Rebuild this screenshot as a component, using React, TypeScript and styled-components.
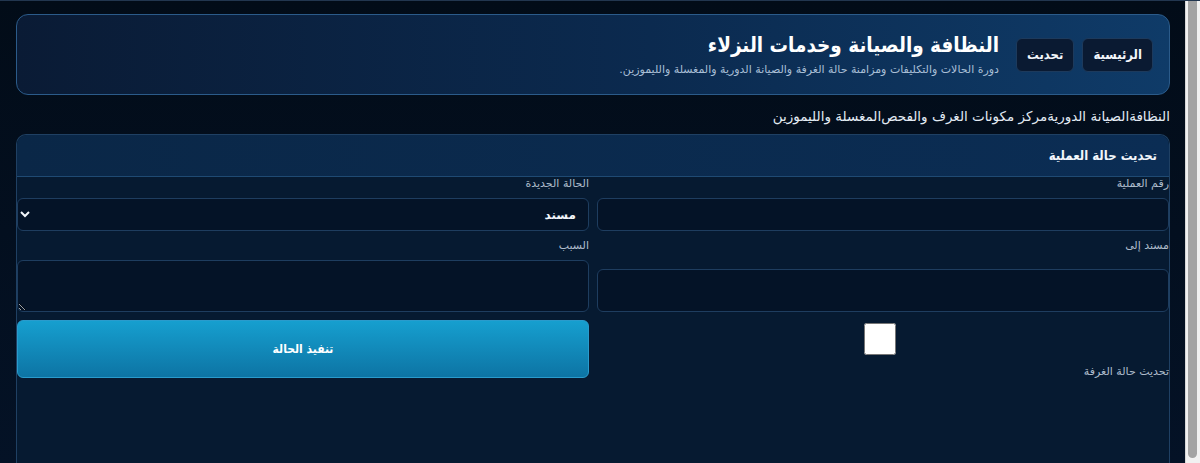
import styled, { createGlobalStyle } from 'styled-components';

const GlobalStyle = createGlobalStyle`
  html, body {
    margin: 0;
    padding: 0;
  }
  body {
    background: linear-gradient(180deg, #020c18 0%, #041226 100%);
    border-top: 1px solid #22364f;
    color: #e6eef7;
    font-family: "DejaVu Sans", "Noto Sans", sans-serif;
    overflow: hidden;
  }
  * {
    box-sizing: border-box;
  }
`;

const narrow = `
  font-family: "DejaVu Sans Condensed", "DejaVu Sans", sans-serif;
  font-stretch: condensed;
`;

const Viewport = styled.div`
  display: flex;
  direction: ltr;
  height: calc(100vh - 1px);
  overflow: hidden;
`;

const Page = styled.div`
  flex: 1;
  min-width: 0;
  direction: rtl;
  padding: 13px 15px 0 16px;
  display: flex;
  flex-direction: column;
`;

/* the browser draws no scrollbar here, so the one in the picture is drawn as a rail */
const ScrollRail = styled.div`
  flex: 0 0 15px;
  background: #f1f1f1;
  border-left: 1px solid #d6d6d6;
  padding: 0 3px 5px 2px;
`;

const ScrollThumb = styled.div`
  height: 100%;
  background: #a3a3a3;
  border-radius: 0 0 5px 5px;
`;

const Hero = styled.header`
  display: flex;
  align-items: center;
  gap: 17px;
  flex: 0 0 81px;
  padding: 0 16px;
  border: 1px solid #2b5b8a;
  border-radius: 12px;
  background: linear-gradient(270deg, #0f3b68 0%, #0b2a4f 45%, #0a1b35 100%);
`;

const HeroActions = styled.div`
  display: flex;
  gap: 8px;
`;

const HeroButton = styled.button`
  ${narrow}
  font-size: 13px;
  font-weight: bold;
  color: #f2f6fb;
  background: #0a1a32;
  border: 1px solid #1d3a5c;
  border-radius: 6px;
  height: 34px;
  padding: 0 10px;
`;

const HeroText = styled.div`
  display: flex;
  flex-direction: column;
  gap: 6px;
`;

const Title = styled.h1`
  ${narrow}
  margin: 0;
  font-size: 20.5px;
  font-weight: bold;
  color: #ffffff;
`;

const Subtitle = styled.p`
  margin: 0;
  font-size: 11px;
  color: #a9bfd6;
`;

const Nav = styled.nav`
  display: flex;
  padding: 13px 0 10px;
  font-size: 13.5px;
`;

const NavLink = styled.a`
  color: #e3ebf4;
  text-decoration: none;
`;

const Card = styled.section`
  flex: 0 0 auto;
  border: 1px solid #1f4063;
  border-bottom: none;
  border-radius: 10px 10px 0 0;
  background: #061a31;
  min-height: 340px;
`;

const CardHeader = styled.div`
  height: 42px;
  display: flex;
  align-items: center;
  padding: 0 12px;
  border-bottom: 1px solid #1f4a73;
  border-radius: 10px 10px 0 0;
  background: linear-gradient(270deg, #0b2d54 0%, #0a2747 100%);
`;

const CardTitle = styled.h2`
  ${narrow}
  margin: 0;
  font-size: 13px;
  font-weight: bold;
  color: #f2f6fb;
`;

const FormGrid = styled.div`
  display: grid;
  grid-template-columns: 1fr 1fr;
  column-gap: 8px;
  row-gap: 8px;
`;

const Field = styled.div`
  display: flex;
  flex-direction: column;
`;

const Label = styled.label`
  font-size: 11px;
  color: #aebccb;
  line-height: 13px;
  padding-bottom: 8px;
`;

const controlBase = `
  font-family: inherit;
  background: #041327;
  border: 1px solid #1e3d5f;
  border-radius: 6px;
  color: #f2f6fb;
  width: 100%;
  margin-top: auto;
`;

const Input = styled.input<{ $tall?: boolean }>`
  ${controlBase}
  height: ${(p) => (p.$tall ? '43px' : '33px')};
`;

const SelectBox = styled.select`
  ${controlBase}
  height: 33px;
  font-size: 12px;
  font-weight: bold;
  padding: 0 8px;
`;

const TextArea = styled.textarea`
  ${controlBase}
  height: 52px;
  resize: vertical;
`;

const SubmitButton = styled.button`
  ${narrow}
  height: 58px;
  border: 1px solid #2a9bcc;
  border-radius: 6px;
  background: linear-gradient(180deg, #169fcf 0%, #0d74a4 100%);
  color: #ffffff;
  font-size: 12px;
  font-weight: bold;
`;

const CheckField = styled.label`
  display: flex;
  flex-direction: column;
  font-size: 11px;
  line-height: 13px;
  color: #aebccb;
`;

const CheckBox = styled.input`
  align-self: center;
  width: 32px;
  height: 32px;
  margin: 3px 6px 10px 0;
`;

export default function App() {
  return (
    <>
      <GlobalStyle />
      <Viewport>
        <Page>
          <Hero>
            <HeroActions>
              <HeroButton>الرئيسية</HeroButton>
              <HeroButton>تحديث</HeroButton>
            </HeroActions>
            <HeroText>
              <Title>النظافة والصيانة وخدمات النزلاء</Title>
              <Subtitle>دورة الحالات والتكليفات ومزامنة حالة الغرفة والصيانة الدورية والمغسلة والليموزين.</Subtitle>
            </HeroText>
          </Hero>
          <Nav>
            <NavLink href="#">النظافة</NavLink>
            <NavLink href="#">الصيانة الدورية</NavLink>
            <NavLink href="#">مركز مكونات الغرف والفحص</NavLink>
            <NavLink href="#">المغسلة والليموزين</NavLink>
          </Nav>
          <Card>
            <CardHeader>
              <CardTitle>تحديث حالة العملية</CardTitle>
            </CardHeader>
            <FormGrid>
              <Field>
                <Label>رقم العملية</Label>
                <Input />
              </Field>
              <Field>
                <Label>الحالة الجديدة</Label>
                <SelectBox defaultValue="assigned">
                  <option value="assigned">مسند</option>
                </SelectBox>
              </Field>
              <Field>
                <Label>مسند إلى</Label>
                <Input $tall />
              </Field>
              <Field>
                <Label>السبب</Label>
                <TextArea />
              </Field>
              <CheckField>
                <CheckBox type="checkbox" />
                تحديث حالة الغرفة
              </CheckField>
              <SubmitButton>تنفيذ الحالة</SubmitButton>
            </FormGrid>
          </Card>
        </Page>
        <ScrollRail>
          <ScrollThumb />
        </ScrollRail>
      </Viewport>
    </>
  );
}
